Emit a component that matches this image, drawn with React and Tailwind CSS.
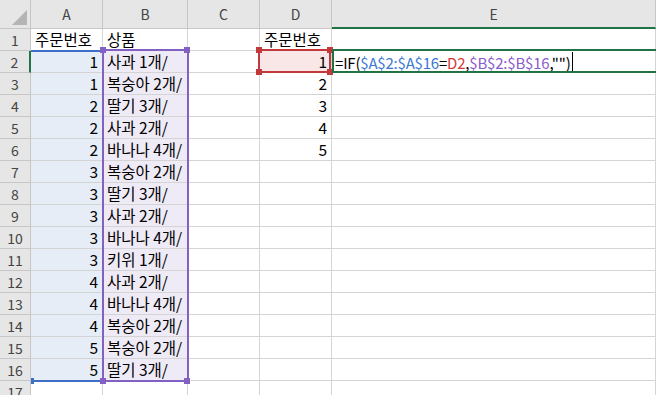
const products = [
  "사과 1개/",
  "복숭아 2개/",
  "딸기 3개/",
  "사과 2개/",
  "바나나 4개/",
  "복숭아 2개/",
  "딸기 3개/",
  "사과 2개/",
  "바나나 4개/",
  "키위 1개/",
  "사과 2개/",
  "바나나 4개/",
  "복숭아 2개/",
  "복숭아 2개/",
  "딸기 3개/",
];
const orderNos = [1, 1, 2, 2, 2, 3, 3, 3, 3, 3, 4, 4, 4, 5, 5];
const colHeads = ["A", "B", "C", "D", "E"];

const font = { fontFamily: '"Noto Sans CJK KR", "Noto Sans", sans-serif' };

function Head({ children, className = "" }) {
  return (
    <div
      className={`flex items-center justify-center border-r border-b border-[#c6c6c6] bg-[#e6e6e6] text-[14px] leading-none text-[#444] ${className}`}
    >
      {children}
    </div>
  );
}

function Cell({ children, className = "", right }) {
  return (
    <div
      className={`flex items-center overflow-visible whitespace-nowrap border-r border-b border-[#d4d4d4] px-[4px] pt-[1px] text-[15.5px] leading-none text-black ${
        right ? "justify-end" : ""
      } ${className}`}
    >
      {children}
    </div>
  );
}

function Handle({ className }) {
  return <div className={`absolute h-[6px] w-[6px] ${className}`} />;
}

export default function App() {
  const rows = [];
  for (let r = 1; r <= 17; r++) {
    const i = r - 2;
    const inRange = r >= 2 && r <= 16;
    rows.push(
      <Head
        key={`h${r}`}
        className={
          r === 2
            ? "bg-[#d2d2d2] border-r-2 border-r-[#217346] border-b-[#c6c6c6]"
            : ""
        }
      >
        {r}
      </Head>
    );
    // A
    rows.push(
      <Cell key={`a${r}`} right={inRange} className={inRange ? "bg-[#e6edf7]" : ""}>
        {r === 1 ? "주문번호" : inRange ? orderNos[i] : ""}
      </Cell>
    );
    // B
    rows.push(
      <Cell key={`b${r}`} className={inRange ? "bg-[#eeeaf6]" : ""}>
        {r === 1 ? "상품" : inRange ? products[i] : ""}
      </Cell>
    );
    // C
    rows.push(<Cell key={`c${r}`} />);
    // D
    rows.push(
      <Cell
        key={`d${r}`}
        right={r >= 2}
        className={r === 2 ? "bg-[#f9e7e7]" : ""}
      >
        {r === 1 ? "주문번호" : r >= 2 && r <= 6 ? r - 1 : ""}
      </Cell>
    );
    // E
    rows.push(
      <Cell key={`e${r}`} className="pl-[3px]">
        {r === 2 && (
          <span className="flex items-center text-[15px] tracking-[-0.2px]">
            <span>=IF(</span>
            <span className="text-[#3a78d6]">$A$2:$A$16</span>
            <span>=</span>
            <span className="text-[#d5383b]">D2</span>
            <span>,</span>
            <span className="text-[#8a5bcc]">$B$2:$B$16</span>
            <span>,"")</span>
            <span className="ml-[1px] h-[20px] w-[1px] bg-black" />
          </span>
        )}
      </Cell>
    );
  }

  return (
    <div className="h-[395px] w-[656px] overflow-hidden bg-white" style={font}>
      <div className="relative grid grid-cols-[31px_72px_85px_72px_72px_1fr] grid-rows-[29px_repeat(17,22px)]">
        {/* corner */}
        <div className="relative border-r border-b border-[#c6c6c6] bg-[#e6e6e6]">
          <svg className="absolute right-[3px] bottom-[3px]" width="15" height="15" viewBox="0 0 15 15">
            <polygon points="15,0 15,15 0,15" fill="#b4b4b4" />
          </svg>
        </div>
        {colHeads.map((c) => (
          <Head
            key={c}
            className={
              c === "C"
                ? "bg-[#9fd5b7]"
                : c === "E"
                ? "bg-[#d2d2d2] border-b-2 border-b-[#217346]"
                : ""
            }
          >
            {c}
          </Head>
        ))}
        {rows}

        {/* range: A2:A16 (left edge hidden under the row header) */}
        <div className="absolute left-[31px] top-[50px] h-[332px] w-[73px] border-y-2 border-[#3d6fc4]" />
        <div className="absolute left-[31px] top-[378px] h-[6px] w-[3px] bg-[#3d6fc4]" />
        {/* range: B2:B16 */}
        <div className="absolute left-[102px] top-[49px] h-[333px] w-[87px] border-2 border-[#8261c3]" />
        <Handle className="left-[100px] top-[47px] bg-[#8261c3]" />
        <Handle className="left-[184px] top-[47px] bg-[#8261c3]" />
        <Handle className="left-[100px] top-[378px] bg-[#8261c3]" />
        <Handle className="left-[184px] top-[378px] bg-[#8261c3]" />
        {/* D2 */}
        <div className="absolute left-[258px] top-[49px] h-[24px] w-[73px] border-2 border-[#c2393c]" />
        <Handle className="left-[256px] top-[47px] bg-[#c2393c]" />
        <Handle className="left-[327px] top-[47px] bg-[#c2393c]" />
        <Handle className="left-[256px] top-[69px] bg-[#c2393c]" />
        <Handle className="left-[327px] top-[69px] bg-[#c2393c]" />
        {/* E2 editing */}
        <div className="absolute left-[332px] right-[-4px] top-[49px] h-[24px] border-2 border-[#217346]" />
      </div>
    </div>
  );
}
